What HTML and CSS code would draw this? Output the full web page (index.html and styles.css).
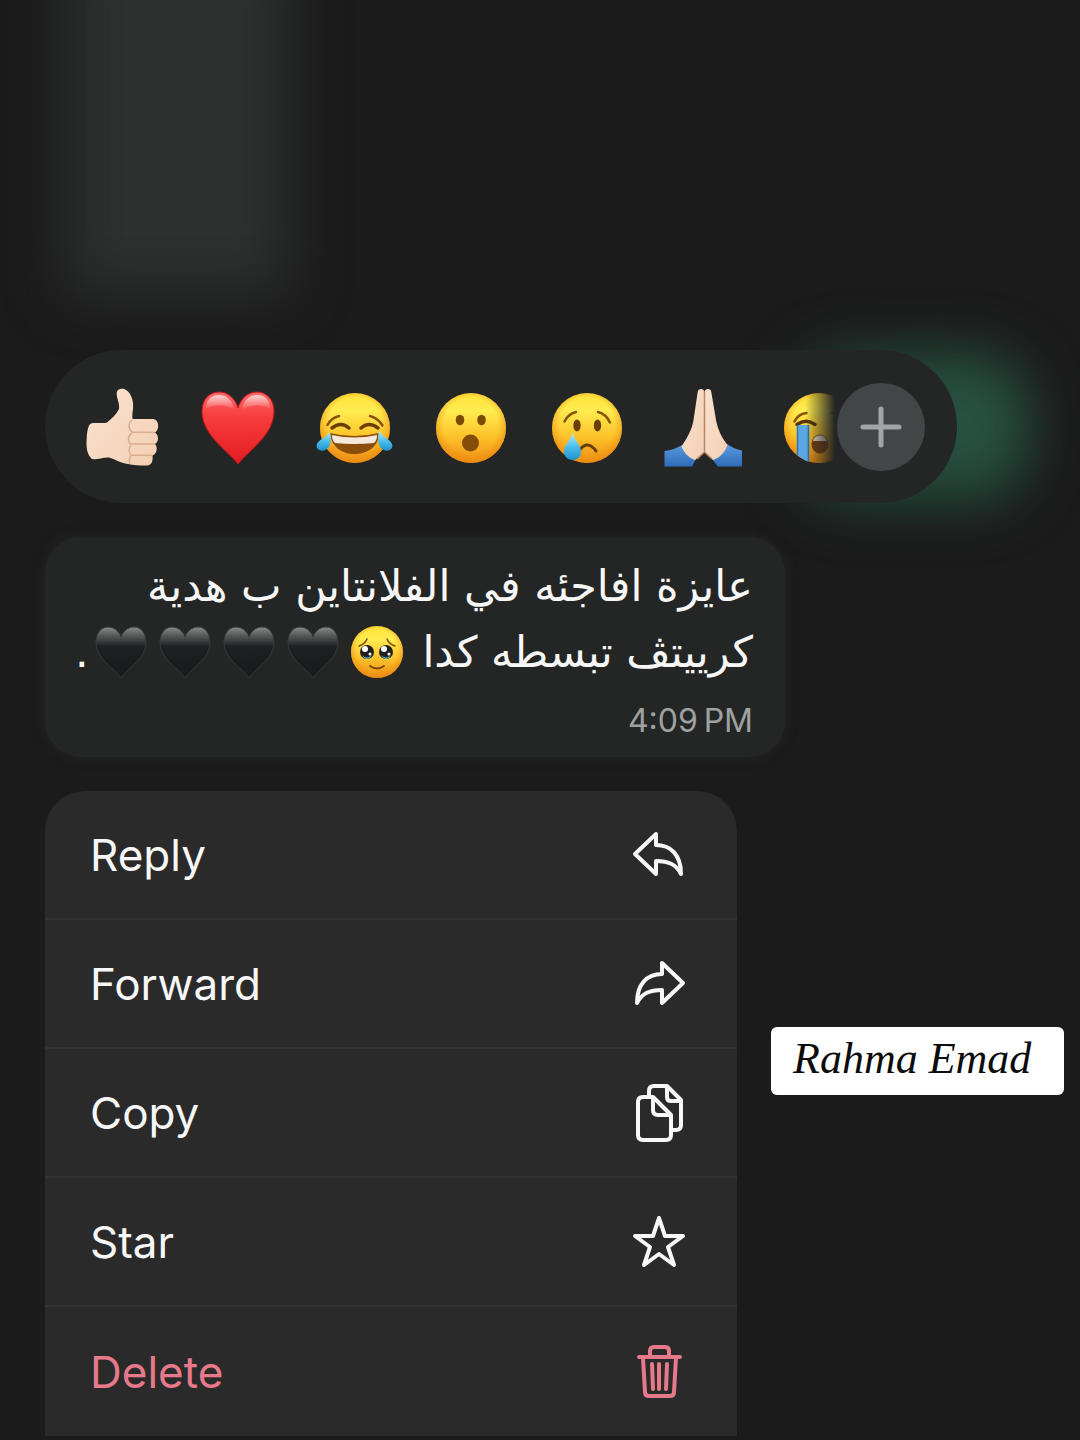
FILE: index.html
```
<!DOCTYPE html>
<html lang="en">
<head>
<meta charset="utf-8">
<meta name="viewport" content="width=device-width, initial-scale=1">
<title>Message actions</title>
<link rel="stylesheet" href="styles.css">
</head>
<body>
<svg class="defs" aria-hidden="true">
  <defs>
    <linearGradient id="face" x1="0" y1="0" x2="0" y2="1">
      <stop offset="0" stop-color="#ffe23a"/><stop offset=".25" stop-color="#ffec50"/><stop offset=".6" stop-color="#fdc62c"/><stop offset="1" stop-color="#f08e14"/>
    </linearGradient>
    <radialGradient id="rim" cx=".5" cy=".45" r=".55">
      <stop offset=".7" stop-color="#f39a1a" stop-opacity="0"/><stop offset="1" stop-color="#e8890f" stop-opacity=".75"/>
    </radialGradient>
    <linearGradient id="tear" x1="0" y1="0" x2="0" y2="1">
      <stop offset="0" stop-color="#bdeafa"/><stop offset=".5" stop-color="#4fc0ec"/><stop offset="1" stop-color="#1c93d0"/>
    </linearGradient>
    <linearGradient id="red" x1="0" y1="0" x2="0" y2="1">
      <stop offset="0" stop-color="#fa6a68"/><stop offset=".35" stop-color="#f83c3c"/><stop offset="1" stop-color="#e01c22"/>
    </linearGradient>
    <linearGradient id="shine" x1="0" y1="0" x2="0" y2="1">
      <stop offset="0" stop-color="#fff" stop-opacity=".7"/><stop offset="1" stop-color="#fff" stop-opacity="0"/>
    </linearGradient>
    <linearGradient id="black" x1="0" y1="0" x2="0" y2="1">
      <stop offset="0" stop-color="#8a8b8b"/><stop offset=".16" stop-color="#5a5b5b"/><stop offset=".38" stop-color="#1e1f20"/><stop offset="1" stop-color="#191a1b"/>
    </linearGradient>
    <linearGradient id="skin" x1="0" y1="0" x2="1" y2="1">
      <stop offset="0" stop-color="#fbe3d0"/><stop offset="1" stop-color="#f3cfb4"/>
    </linearGradient>
    <linearGradient id="sleeve" x1="0" y1="0" x2="0" y2="1">
      <stop offset="0" stop-color="#5b9be0"/><stop offset="1" stop-color="#2e6cb8"/>
    </linearGradient>
    <symbol id="ball" viewBox="0 0 80 80">
      <circle cx="41" cy="41" r="35" fill="url(#face)"/><circle cx="41" cy="41" r="35" fill="url(#rim)"/>
    </symbol>
    <symbol id="black-heart" viewBox="0 0 54 54">
      <path d="M27 53C19 42 2 34 2 17C2 8 7 2 14 2C20 2 25 6 27 12C29 6 34 2 40 2C47 2 52 8 52 17C52 34 35 42 27 53Z" fill="url(#black)" stroke="#38393a" stroke-width="1"/>
    </symbol>
  </defs>
</svg>

<main class="screen">
  <div class="backdrop" aria-hidden="true">
    <div class="glow glow-grey"></div>
    <div class="glow glow-green"></div>
  </div>

  <section class="reactions" aria-label="Reactions">
    <div class="reaction-list">
      <button class="reaction" type="button" aria-label="Thumbs up">
        <svg viewBox="0 0 80 80">
          <path d="M34.700 6C35 1 42 1 44 3C49 6 52 14 51 22C50.500 26 50 29 50.500 32L71 32C77 32 78 43 73 45.500C77 48 77 55 73 57C76 60 75 67 70.500 68.500C71 74 70 78 65 78.500C58 78.500 51 78 46 77C38 76 33 72 27 70.500C21 70 15 73 10 72C5 68 4 60 4.700 52C5 45 6 38 9 36.500C14 35 20 37 25 35.500C29 32 34 28 37 22C38 17 34.500 11 34.700 6Z" fill="url(#skin)"/>
          <path d="M50 33C46 36 46 42 50 45L73 45.500M50 46C45 49 46 55 49 57L73 57M49 58C46 62 47 66 49 68L70.500 68.500M49 69C47 72 47 75 48 77" fill="none" stroke="#d9ad8e" stroke-width="1.500"/>
        </svg>
      </button>
      <button class="reaction" type="button" aria-label="Red heart">
        <svg viewBox="0 0 80 80">
          <path d="M40 77C28 62 4 48 4 24C4 12 12 5 21 5C30 5 37 11 40 21C43 11 50 5 59 5C68 5 76 12 76 24C76 48 52 62 40 77Z" fill="url(#red)" stroke="#c0141c" stroke-width="1"/>
          <path d="M8 22C8 12 14 8 21 8C29 8 35 14 36 23C28 17 15 17 8 22ZM44 23C45 14 51 8 59 8C66 8 72 12 72 22C65 17 52 17 44 23Z" fill="url(#shine)"/>
        </svg>
      </button>
      <button class="reaction" type="button" aria-label="Tears of joy">
        <svg viewBox="0 0 80 80">
          <use href="#ball"/>
          <path d="M13.500 38Q17 31 25 29M56 29Q64 31 68.500 38.500" fill="none" stroke="#8a5208" stroke-width="2.500" stroke-linecap="round"/>
          <path d="M18 41Q27 34 35 41M47 41Q55 34 64 41" fill="none" stroke="#6b3e06" stroke-width="3.500" stroke-linecap="round"/>
          <path d="M16 46Q40 52 65 46C65 59 54 67 40.500 67C27 67 17 59 16 46Z" fill="#8a4e0a"/>
          <path d="M18 48Q40 53 63 48C63 52 62 54 60 56Q40 58 21 56C19 54 18 52 18 48Z" fill="#f6e8dc"/>
          <path d="M16 45C18 53 17 61 10 63.500C4 64.500 1 60 3.500 56C6 52 12 51 16 45ZM65 44C63 53 64 61 71 63.500C77 64.500 80 60 77.500 56C75 52 69 50 65 44Z" fill="url(#tear)"/>
        </svg>
      </button>
      <button class="reaction" type="button" aria-label="Surprised">
        <svg viewBox="0 0 80 80">
          <use href="#ball"/>
          <ellipse cx="30" cy="33" rx="4.300" ry="5.300" fill="#7c4a05"/><ellipse cx="51.500" cy="33" rx="4.300" ry="5.300" fill="#7c4a05"/>
          <circle cx="40.500" cy="56" r="8.500" fill="#854c08"/>
        </svg>
      </button>
      <button class="reaction" type="button" aria-label="Crying">
        <svg viewBox="0 0 80 80">
          <use href="#ball"/>
          <path d="M18.500 34.500Q22 27 30 25M52 25Q60 27 64 35.500" fill="none" stroke="#8a5208" stroke-width="2.500" stroke-linecap="round"/>
          <ellipse cx="31" cy="38.500" rx="3.700" ry="6" fill="#6b3e06"/><ellipse cx="51.500" cy="38.500" rx="3.700" ry="6" fill="#6b3e06"/>
          <path d="M34 62.500Q42 53 50 64" fill="none" stroke="#6b3e06" stroke-width="3" stroke-linecap="round"/>
          <path d="M26.700 45.500C28 53 35 58 35 64.500C35 70 31 73 26.700 73C22 73 18 70 18 64.500C18 58 25 53 26.700 45.500Z" fill="url(#tear)"/>
        </svg>
      </button>
      <button class="reaction" type="button" aria-label="Folded hands">
        <svg viewBox="0 0 80 80">
          <path d="M2.500 64Q12 63 20 58L34 72L30 79.500H2.500ZM65 57Q72 62 80 63.500V79.500H56L50 72Z" fill="url(#sleeve)"/>
          <path d="M42.500 5C42 1 36 1 35.700 5L31.500 33C30 43 25 51 19.500 59.500C22 66 27 71 33 73L42.500 65Z" fill="url(#skin)"/>
          <path d="M42.500 5C43 1 49 1 49.300 5L54 33C56 43 60 51 65.500 58C63 66 57 71 51 73L42.500 65Z" fill="url(#skin)"/>
          <path d="M42.500 4V65M42.500 65L35 72M42.500 65L50 72" stroke="#b98766" stroke-width="1.500" fill="none"/>
        </svg>
      </button>
      <button class="reaction" type="button" aria-label="Sobbing">
        <svg viewBox="0 0 80 80">
          <use href="#ball"/>
          <path d="M16.500 34.500Q20 27 28.500 26M54 26Q62 27 66 34.500" fill="none" stroke="#8a5208" stroke-width="2.500" stroke-linecap="round"/>
          <path d="M19 37.500Q28 31 37 37.500" fill="none" stroke="#5d3505" stroke-width="3.500" stroke-linecap="round"/>
          <path d="M19.500 38H30.500V75Q24 72 19.500 68Z" fill="#5aa9e6"/>
          <path d="M19.500 38V68M30.500 38V74" stroke="#2a77b8" stroke-width="1.500"/>
          <ellipse cx="42" cy="57" rx="8.500" ry="9.500" fill="#7c3f08"/><path d="M35 54Q36 48.500 42 48.500T49 54Z" fill="#f1e6dd"/>
        </svg>
      </button>
    </div>
    <button class="more" type="button" aria-label="More reactions">
      <svg viewBox="0 0 88 88"><path d="M44 26V62M26 44H62" stroke="#a2a4a5" stroke-width="5" stroke-linecap="round"/></svg>
    </button>
  </section>

  <article class="bubble">
    <p class="message" lang="ar" dir="rtl">عايزة افاجئه في الفلانتاين ب هدية<br>كرييتڤ تبسطه كدا <svg class="emoji" viewBox="0 0 54 54" role="img" aria-label="Pleading face">
        <circle cx="27" cy="27" r="26" fill="url(#face)"/><circle cx="27" cy="27" r="26" fill="url(#rim)"/>
        <path d="M9 21Q15 19 17 14M37 14Q39 19 45 21" fill="none" stroke="#7a4a08" stroke-width="1.500" stroke-linecap="round"/>
        <circle cx="17" cy="27" r="7" fill="#20201e"/><circle cx="36" cy="27" r="7" fill="#20201e"/>
        <path d="M12 30Q17 35 22 30Q20 34 17 34T12 30ZM31 30Q36 35 41 30Q39 34 36 34T31 30Z" fill="#49b5c9"/>
        <circle cx="15" cy="24" r="3" fill="#fff"/><circle cx="34" cy="24" r="3" fill="#fff"/><circle cx="20" cy="29" r="1.500" fill="#fff"/><circle cx="39" cy="29" r="1.500" fill="#fff"/>
        <path d="M20 41Q27 46 34 41" fill="none" stroke="#7a4a08" stroke-width="2" stroke-linecap="round"/>
      </svg><svg class="emoji" role="img" aria-label="Black heart"><use href="#black-heart"/></svg><svg class="emoji" role="img" aria-label="Black heart"><use href="#black-heart"/></svg><svg class="emoji" role="img" aria-label="Black heart"><use href="#black-heart"/></svg><svg class="emoji" role="img" aria-label="Black heart"><use href="#black-heart"/></svg>.</p>
    <time class="time" datetime="16:09">4:09&#8201;PM</time>
  </article>

  <div class="lower">
    <div class="menu">
      <button class="item" type="button">Reply
        <svg class="icon" viewBox="0 0 60 60"><path d="M27 9V20C41 20 52 29 52 49C47 39 39 36 27 36V49L6 29Z"/></svg>
      </button>
      <button class="item" type="button">Forward
        <svg class="icon" viewBox="0 0 60 60"><path d="M33 9V20C18 20 8 30 8 49C13 39 21 36 33 36V49L54 29Z"/></svg>
      </button>
      <button class="item" type="button">Copy
        <svg class="icon" viewBox="0 0 60 60"><path d="M20 14V8Q20 3 25 3H38L52 17V42Q52 47 47 47H43M38 3V14Q38 18 42 18H52M9 19Q9 14 14 14H24L42 32V52Q42 57 37 57H14Q9 57 9 52ZM24 14V27Q24 32 29 32H42"/></svg>
      </button>
      <button class="item" type="button">Star
        <svg class="icon" viewBox="0 0 60 60"><path d="M30 6L36 24H54L39 35L45 53L30 42L15 53L21 35L6 24H24Z"/></svg>
      </button>
      <button class="item item-danger" type="button">Delete
        <svg class="icon" viewBox="0 0 60 60"><path d="M10 15H51M21 14V9Q21 5 25 5H36Q40 5 40 9V14M14 16L16 50Q16 54 20 54H41Q45 54 45 50L47 16M23 22L24 47M30 22V47M38 22L37 47"/></svg>
      </button>
    </div>
    <p class="sticker">Rahma Emad</p>
  </div>
</main>
</body>
</html>
```
FILE: styles.css
```
* { box-sizing: border-box; }

body {
  margin: 0;
  background: #1b1b1b;
  color: #f7f7f7;
  font-family: Inter, "Liberation Sans", sans-serif;
}

button {
  margin: 0;
  padding: 0;
  border: 0;
  background: none;
  color: inherit;
  font: inherit;
  cursor: pointer;
}

svg { display: block; }
p { margin: 0; }

.defs {
  position: absolute;
  width: 0;
  height: 0;
}

.screen {
  position: relative;
  display: flex;
  flex-direction: column;
  align-items: flex-start;
  gap: 34px;
  min-height: 100vh;
  padding: 350px 16px 4px 45px;
  overflow: hidden;
}

/* Blurred conversation behind the menu */
.backdrop {
  position: absolute;
  inset: 0;
}

.glow { position: absolute; }

.glow-grey {
  top: -60px;
  left: 66px;
  width: 222px;
  height: 354px;
  background: #2d302f;
  filter: blur(28px);
}

.glow-green {
  top: 350px;
  left: 790px;
  width: 240px;
  height: 156px;
  border-radius: 60px;
  background: radial-gradient(ellipse at 70% 45%, #2a5745, #1e3a2f);
  filter: blur(26px);
}

.reactions,
.bubble,
.lower { position: relative; }

.reactions {
  display: flex;
  align-items: center;
  width: 100%;
  max-width: 912px;
  height: 153px;
  padding-right: 32px;
  border-radius: 77px;
  background: #242625;
}

.reaction-list {
  display: flex;
  flex: 1;
  gap: 36px;
  min-width: 0;
  padding-left: 37px;
  overflow: hidden;
  -webkit-mask-image: linear-gradient(to left, transparent 2px, #000 32px);
  mask-image: linear-gradient(to left, transparent 2px, #000 32px);
}

.reaction {
  flex: none;
  width: 80px;
  height: 80px;
}

.more {
  flex: none;
  width: 88px;
  height: 88px;
  border-radius: 50%;
  background: #434647;
}

.bubble {
  display: flex;
  flex-direction: column;
  align-items: flex-end;
  width: 100%;
  max-width: 740px;
  padding: 16px 32px 16px 16px;
  border-radius: 36px;
  background: #242625;
  box-shadow: 0 0 12px #242625;
}

.message {
  font-family: "DejaVu Sans", sans-serif;
  font-size: 43px;
  line-height: 66px;
}

.emoji {
  display: inline-block;
  width: 54px;
  height: 54px;
  margin: 0 5px;
  vertical-align: -12px;
}

.time {
  margin-top: 16px;
  color: #a0a1a1;
  font-size: 32px;
  line-height: 40px;
}

.lower {
  display: flex;
  align-items: flex-start;
  gap: 34px;
  width: 100%;
}

.menu {
  flex: 0 1 692px;
  border-radius: 40px 40px 0 0;
  background: #2a2a2a;
  overflow: hidden;
}

.item {
  display: flex;
  align-items: center;
  justify-content: space-between;
  width: 100%;
  height: 129px;
  padding: 0 48px 0 45px;
  border-bottom: 2px solid #333;
  font-size: 44px;
  text-align: left;
}

.item:last-child { border-bottom: 0; }
.item-danger { color: #e6798a; }

.icon {
  width: 60px;
  height: 60px;
  fill: none;
  stroke: currentColor;
  stroke-width: 4;
  stroke-linecap: round;
  stroke-linejoin: round;
}

.sticker {
  flex: 0 1 293px;
  margin-top: 236px;
  padding: 4px 22px 8px;
  border-radius: 6px;
  background: #fff;
  color: #0c0c0c;
  font-family: "Liberation Serif", serif;
  font-size: 44px;
  font-style: italic;
  line-height: 56px;
  white-space: nowrap;
}
```
